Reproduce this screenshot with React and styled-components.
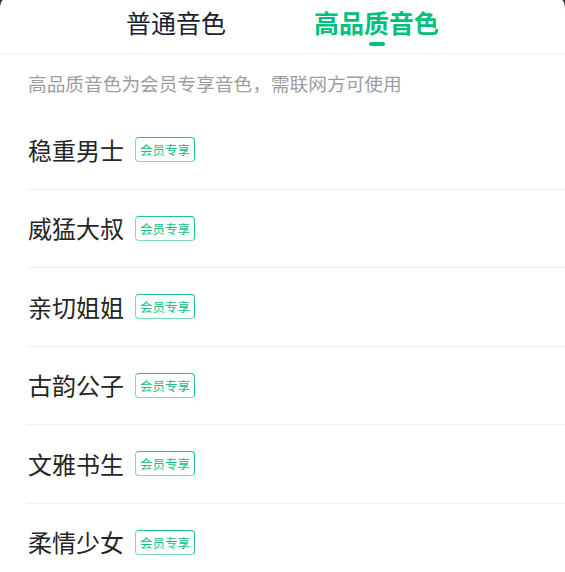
import React, { useState } from 'react';
import styled, { createGlobalStyle } from 'styled-components';

const GlobalStyle = createGlobalStyle`
    html, body {
        margin: 0;
        padding: 0;
        background: #2b2b2b;
    }
    body {
        font-family: "Noto Sans CJK SC", "Noto Sans", sans-serif;
        -webkit-font-smoothing: antialiased;
    }
`;

// folha branca com cantos arredondados
const Sheet = styled.div`
    min-height: 100vh;
    background: #fff;
    border-radius: 3px 3px 0 0 / 9px 9px 0 0;
    overflow: hidden;
`;

const Tabs = styled.div`
    height: 54px;
    box-sizing: border-box;
    display: flex;
    justify-content: center;
    gap: 44px;
    border-bottom: 1px solid #f2f2f2;
`;

const Tab = styled.div`
    display: flex;
    flex-direction: column;
    align-items: center;
    padding: 10px 22px 0;
    cursor: pointer;
    font-size: 25px;
    line-height: 25px;
    font-weight: ${(p) => (p.$active ? 600 : 400)};
    color: ${(p) => (p.$active ? '#00c07a' : '#1b1e30')};
`;

const Indicator = styled.span`
    width: 16px;
    height: 4px;
    margin-top: 7px;
    border-radius: 2px;
    background: #00c07a;
    visibility: ${(p) => (p.$show ? 'visible' : 'hidden')};
`;

const Notice = styled.div`
    height: 57px;
    line-height: 57px;
    padding-left: 28px;
    font-size: 18.7px;
    color: #9d9d9d;
`;

const List = styled.div`
    padding-left: 28px;
`;

const Row = styled.div`
    height: 78.5px;
    box-sizing: border-box;
    display: flex;
    align-items: center;
    gap: 11px;
    border-bottom: 1px solid #f0f0f0;
`;

const Name = styled.span`
    font-size: 24px;
    line-height: 26px;
    color: #252525;
`;

const Badge = styled.span`
    height: 25px;
    box-sizing: border-box;
    padding: 0 4px;
    line-height: 23px;
    font-size: 12.5px;
    color: #12bf7e;
    border: 1px solid #1cc688;
    border-left-color: #7fdcb8;
    border-bottom-color: #7fdcb8;
    border-radius: 4px;
`;

const voices = ['稳重男士', '威猛大叔', '亲切姐姐', '古韵公子', '文雅书生', '柔情少女'];

const App = () => {
    const [tab, setTab] = useState(1);

    return (
        <>
            <GlobalStyle />
            <Sheet>
                <Tabs>
                    {['普通音色', '高品质音色'].map((label, i) => (
                        <Tab key={label} $active={tab === i} onClick={() => setTab(i)}>
                            {label}
                            <Indicator $show={tab === i} />
                        </Tab>
                    ))}
                </Tabs>

                <Notice>高品质音色为会员专享音色，需联网方可使用</Notice>

                <List>
                    {voices.map((v) => (
                        <Row key={v}>
                            <Name>{v}</Name>
                            <Badge>会员专享</Badge>
                        </Row>
                    ))}
                </List>
            </Sheet>
        </>
    );
};

export default App;
